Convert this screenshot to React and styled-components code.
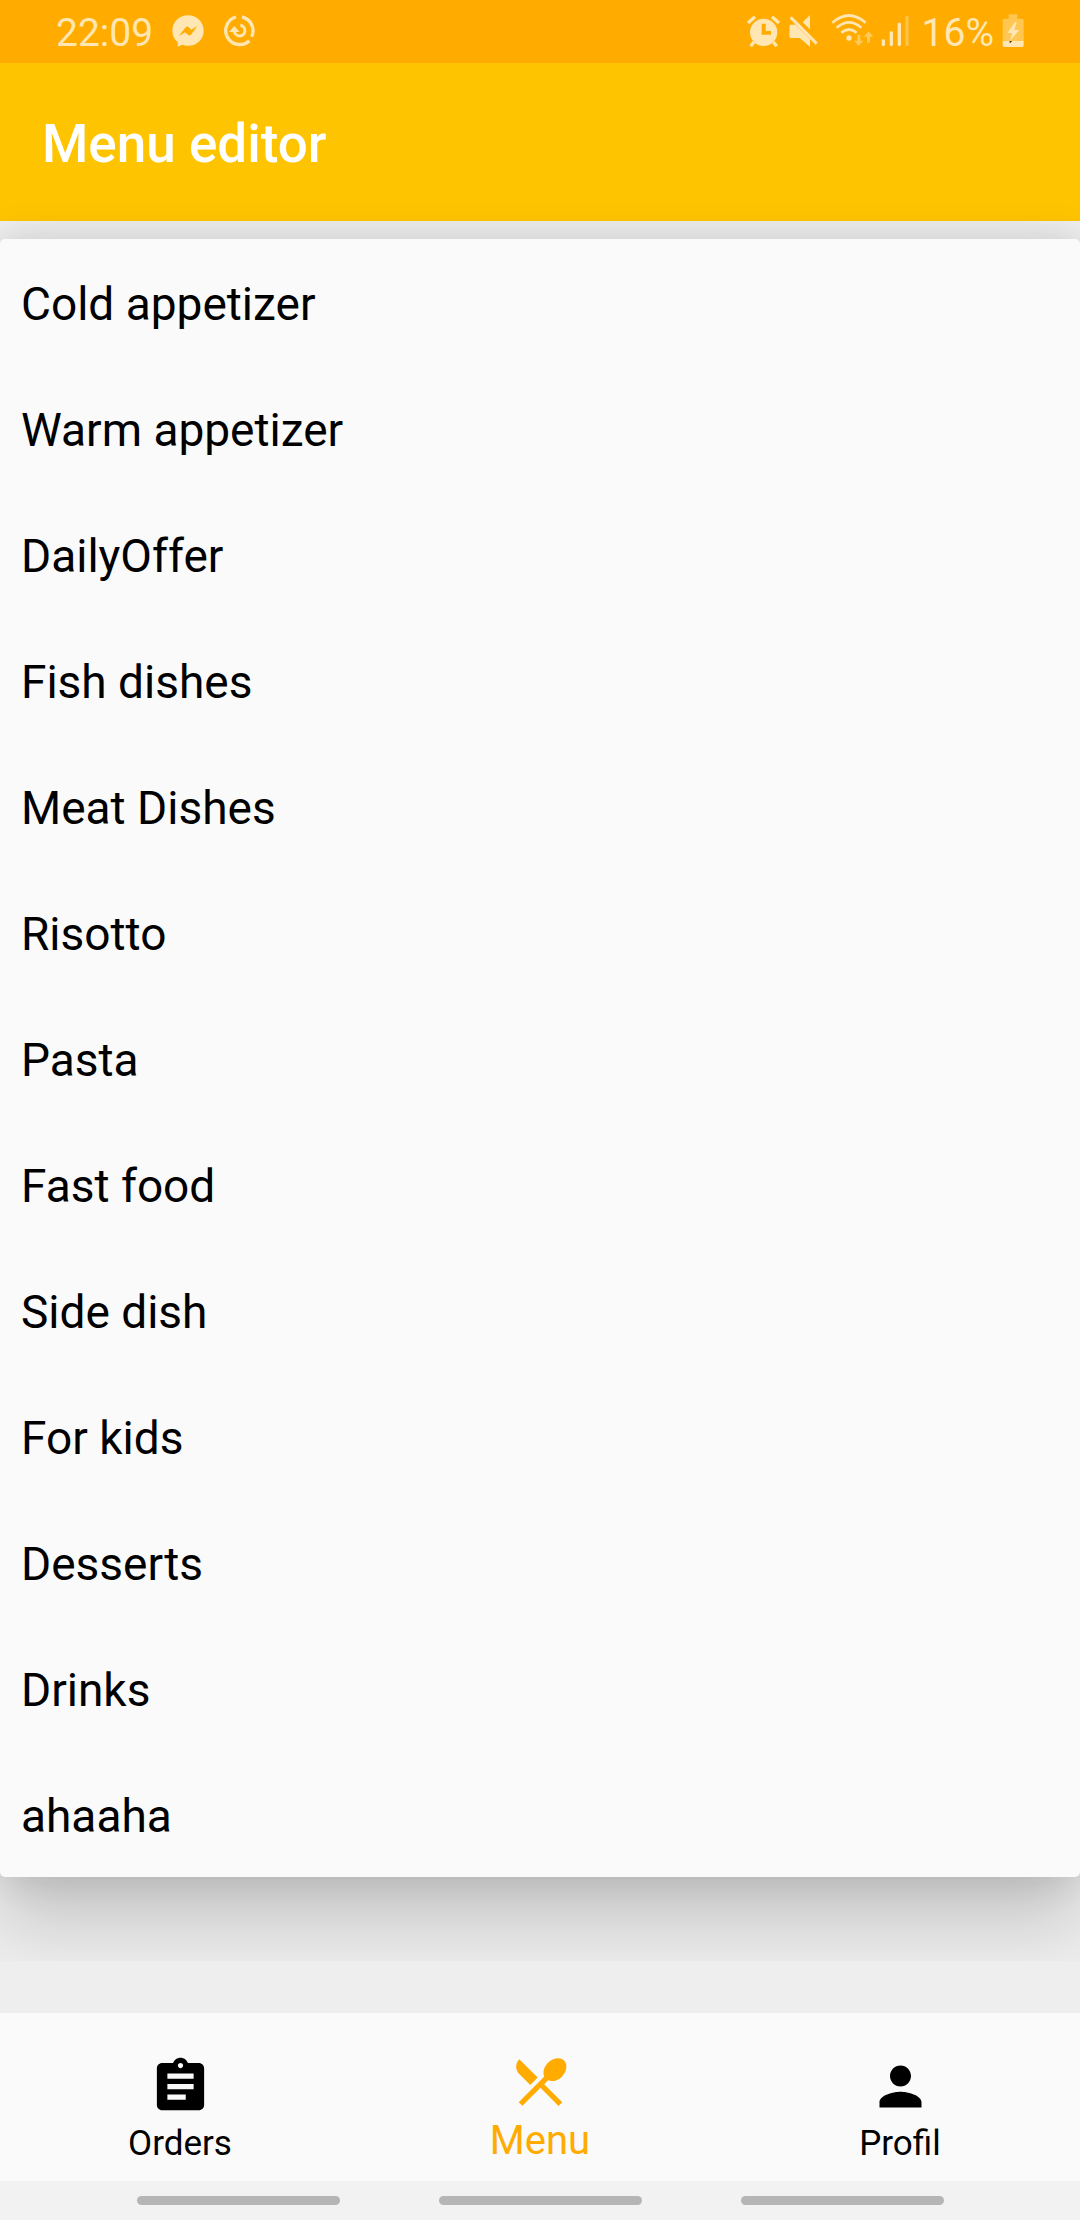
import React, { useState } from "react";
import styled, { createGlobalStyle } from "styled-components";

const GlobalStyle = createGlobalStyle`
  *, *::before, *::after { box-sizing: border-box; }
  body { margin: 0; background: #eeeeee; }
  button { font: inherit; border: 0; background: none; cursor: pointer; }
`;

const Screen = styled.div`
  display: flex;
  flex-direction: column;
  min-height: 100vh;
  font-family: Roboto, "Liberation Sans", sans-serif;
  color: #000000;
`;

const StatusBar = styled.div`
  display: flex;
  justify-content: space-between;
  height: 63px;
  padding: 0 56px;
  background: #ffab00;
  color: #ffe6b3;
`;

const StatusGroup = styled.div`
  display: flex;
  align-items: center;
  gap: ${(p) => p.$gap};
`;

const StatusText = styled.span`
  font-size: 39px;
  line-height: 45px;
  padding-top: 3px;
`;

const StatusIcon = styled.svg`
  display: block;
  flex: none;
  height: 33px;
  margin-bottom: 3px;
  overflow: visible;
  fill: currentColor;
`;

const AppBar = styled.header`
  display: flex;
  align-items: center;
  height: 158px;
  padding: 4px 42px 0;
  background: #ffc400;
`;

const Title = styled.h1`
  margin: 0;
  font-size: 53px;
  font-weight: 500;
  line-height: 62px;
  color: #ffffff;
`;

const Content = styled.main`
  flex: 1;
  background: #eeeeee;
`;

const ListArea = styled.div`
  padding: 18px 0 84px;
  clip-path: inset(-18px 0 0 0);
`;

const CardList = styled.ul`
  margin: 0;
  padding: 0;
  list-style: none;
  border-radius: 5px;
  background: #fafafa;
  box-shadow: 0 48px 70px rgba(0, 0, 0, 0.16), 0 0 40px rgba(0, 0, 0, 0.14);
`;

const Category = styled.button`
  display: block;
  width: 100%;
  height: 126px;
  padding: 4px 21px 0;
  text-align: left;
  font-size: 46px;
  line-height: 54px;
  color: inherit;
`;

const BottomNav = styled.nav`
  display: grid;
  grid-template-columns: repeat(3, 1fr);
  height: 168px;
  background: #fafafa;
`;

const Tab = styled.button`
  display: flex;
  flex-direction: column;
  align-items: center;
  justify-content: flex-end;
  gap: 4px;
  padding: 0 0 16px;
  color: ${(p) => (p.$active ? "#ffab00" : "#000000")};
  font-size: ${(p) => (p.$active ? "40px" : "35px")};
  line-height: ${(p) => (p.$active ? "48px" : "43px")};
`;

const TabIcon = styled.svg`
  display: block;
  width: 63px;
  height: 63px;
  fill: currentColor;
`;

const GestureBar = styled.div`
  display: flex;
  justify-content: center;
  align-items: center;
  gap: 99px;
  height: 39px;
  background: #f2f2f2;
`;

const GestureHandle = styled.span`
  width: 203px;
  height: 9px;
  border-radius: 5px;
  background: #b5b5b5;
`;

const categories = [
  "Cold appetizer",
  "Warm appetizer",
  "DailyOffer",
  "Fish dishes",
  "Meat Dishes",
  "Risotto",
  "Pasta",
  "Fast food",
  "Side dish",
  "For kids",
  "Desserts",
  "Drinks",
  "ahaaha",
];

const tabs = [
  {
    label: "Orders",
    path: "M19 3h-4.18C14.4 1.84 13.3 1 12 1c-1.3 0-2.4.84-2.82 2H5c-1.1 0-2 .9-2 2v14c0 1.1.9 2 2 2h14c1.1 0 2-.9 2-2V5c0-1.1-.9-2-2-2zm-7 0c.55 0 1 .45 1 1s-.45 1-1 1-1-.45-1-1 .45-1 1-1zm2 14H7v-2h7v2zm3-4H7v-2h10v2zm0-4H7V7h10v2z",
  },
  {
    label: "Menu",
    path: "M8.1 13.34l2.83-2.83L3.91 3.5c-1.56 1.56-1.56 4.09 0 5.66l4.19 4.18zm6.78-1.81c1.53.71 3.68.21 5.27-1.38 1.91-1.91 2.28-4.65.81-6.12-1.46-1.46-4.2-1.1-6.12.81-1.59 1.59-2.09 3.74-1.38 5.27L3.7 19.87l1.41 1.41L12 14.41l6.88 6.88 1.41-1.41L13.41 13l1.47-1.47z",
  },
  {
    label: "Profil",
    path: "M12 12c2.21 0 4-1.79 4-4s-1.79-4-4-4-4 1.79-4 4 1.79 4 4 4zm0 2c-2.67 0-8 1.34-8 4v2h16v-2c0-2.66-5.33-4-8-4z",
  },
];

function MessengerIcon() {
  return (
    <StatusIcon viewBox="0 0 96 99" width="32" aria-hidden="true">
      <path
        fillRule="evenodd"
        d="M48 4C21 4 1 24 1 50c0 15 6 26 16 34v14l14-6c5 2 11 3 17 3 27 0 47-19 47-45S75 4 48 4zM20 67l21-27c3-3 5-3 8-1l9 8 18-11-19 26c-3 3-5 3-8 1l-10-8z"
      />
    </StatusIcon>
  );
}

function SyncIcon() {
  return (
    <StatusIcon viewBox="0 0 96 99" width="32" aria-hidden="true">
      <g fill="none" stroke="currentColor" strokeWidth="10">
        <path d="M39 9A42 42 0 1 0 79 80" />
        <path d="M57 9A42 42 0 0 1 86 68" />
        <path d="M52 34A16 16 0 1 1 34 52V46" strokeWidth="9" />
      </g>
      <path d="M18 54L34 36L50 54z" />
    </StatusIcon>
  );
}

function AlarmIcon() {
  return (
    <StatusIcon viewBox="46 40 99 99" width="33" aria-hidden="true">
      <path
        fillRule="evenodd"
        d="M96 54a41 41 0 1 0 0 82a41 41 0 1 0 0-82zM90 69h12v22h16v11H90z"
      />
      <path
        d="M49 67L70 48M142 67L121 48M67 124L57 137M125 124L135 137"
        stroke="currentColor"
        strokeWidth="10"
      />
    </StatusIcon>
  );
}

function MuteIcon() {
  return (
    <StatusIcon viewBox="172 40 87 99" width="29" aria-hidden="true">
      <path d="M235 43V86L213 65zM174 72H192L235 116V138L204 112H178Q173 112 173 106z" />
      <path d="M177 50L255 129" stroke="currentColor" strokeWidth="9" />
    </StatusIcon>
  );
}

function WifiIcon() {
  return (
    <StatusIcon viewBox="286 40 135 99" width="45" aria-hidden="true">
      <g fill="none" stroke="currentColor" strokeWidth="8">
        <path d="M302 66Q352 23 402 66" />
        <path d="M315 81Q352 49 389 81" />
        <path d="M329 96Q352 77 375 96" />
      </g>
      <circle cx="352" cy="112" r="8" />
      <g opacity="0.5">
        <path d="M377 102H386V120H396L381 136L367 120H377z" />
        <path d="M406 126H415V108H425L411 92L396 108H406z" />
      </g>
    </StatusIcon>
  );
}

function SignalIcon() {
  return (
    <StatusIcon viewBox="448 40 87 99" width="29" aria-hidden="true">
      <rect x="450" y="116" width="10" height="20" rx="4" />
      <rect x="474" y="92" width="10" height="44" rx="4" />
      <rect x="498" y="66" width="10" height="70" rx="4" />
      <rect x="521" y="46" width="10" height="90" rx="4" opacity="0.4" />
    </StatusIcon>
  );
}

function BatteryIcon() {
  return (
    <StatusIcon viewBox="814 42 66 99" width="22" aria-hidden="true">
      <path
        opacity="0.45"
        d="M834 43H860V56H874Q879 56 879 61V123H816V61Q816 56 821 56H834z"
      />
      <path d="M816 123H879V136Q879 141 874 141H821Q816 141 816 136z" />
      <path d="M853 66L830 99H844L838 123L866 90H851L858 66z" />
      <path d="M837 123H843V126H840V129H837z" fill="#3d2c10" />
    </StatusIcon>
  );
}

export default function App() {
  const [active, setActive] = useState("Menu");

  return (
    <Screen>
      <GlobalStyle />
      <StatusBar>
        <StatusGroup $gap="19px">
          <StatusText>22:09</StatusText>
          <MessengerIcon />
          <SyncIcon />
        </StatusGroup>
        <StatusGroup $gap="12px">
          <StatusGroup $gap="9px">
            <AlarmIcon />
            <MuteIcon />
            <WifiIcon />
            <SignalIcon />
          </StatusGroup>
          <StatusGroup $gap="8px">
            <StatusText>16%</StatusText>
            <BatteryIcon />
          </StatusGroup>
        </StatusGroup>
      </StatusBar>
      <AppBar>
        <Title>Menu editor</Title>
      </AppBar>
      <Content>
        <ListArea>
          <CardList>
            {categories.map((name) => (
              <li key={name}>
                <Category type="button">{name}</Category>
              </li>
            ))}
          </CardList>
        </ListArea>
      </Content>
      <BottomNav aria-label="Main">
        {tabs.map(({ label, path }) => (
          <Tab
            key={label}
            type="button"
            $active={label === active}
            aria-current={label === active ? "page" : undefined}
            onClick={() => setActive(label)}
          >
            <TabIcon viewBox="0 0 24 24" aria-hidden="true">
              <path d={path} />
            </TabIcon>
            <span>{label}</span>
          </Tab>
        ))}
      </BottomNav>
      <GestureBar>
        <GestureHandle />
        <GestureHandle />
        <GestureHandle />
      </GestureBar>
    </Screen>
  );
}
